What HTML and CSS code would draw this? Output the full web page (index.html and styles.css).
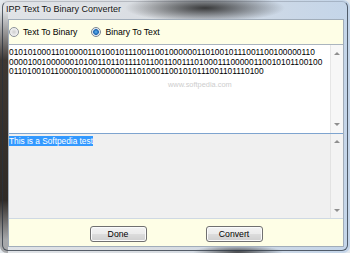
FILE: index.html
```html
<!DOCTYPE html>
<html lang="en">
    <head>
        <meta charset="UTF-8">
        <meta name="viewport" content="width=device-width, initial-scale=1.0">
        <title>IPP Text To Binary Converter</title>

        <link rel="stylesheet" href="styles.css">
    </head>
    <body>
        <div class="window">
            <div class="titlebar">IPP Text To Binary Converter</div>
            <div class="client">
                <div class="options">
                    <label class="radio"><span class="dot"></span>Text To Binary</label>
                    <label class="radio checked"><span class="dot"></span>Binary To Text</label>
                </div>

                <!-- binary input -->
                <div class="box box-binary">
                    <div class="box-text">0101010001101000011010010111001100100000011010010111001100100000110
000010010000001010011011011110110011001110100011100000110010101100100
01101001011000010010000001110100011001010111001101110100</div>
                    <div class="scrollbar">
                        <span class="arrow up"></span>
                        <span class="arrow down"></span>
                    </div>
                    <div class="watermark">www.softpedia.com</div>
                </div>

                <!-- converted text -->
                <div class="box box-result">
                    <div class="box-text"><span class="selected">This is a Softpedia test</span></div>
                    <div class="scrollbar">
                        <span class="arrow up"></span>
                        <span class="arrow down"></span>
                    </div>
                </div>

                <div class="actions">
                    <button class="btn">Done</button>
                    <button class="btn">Convert</button>
                </div>
            </div>
        </div>
    </body>
</html>
```
FILE: styles.css
```css
body {
    margin: 0;
    padding: 0;
    background-color: #e4e9ee;
    font-family: "Liberation Sans", Arial, sans-serif;
}

.window {
    position: relative;
    width: 350px;
    height: 253px;
    display: flex;
    flex-direction: column;
    border-radius: 7px;
    background-color: #d3dbe4;
    background-image:
        radial-gradient(ellipse 80px 14px at 205px 8px, rgba(40, 40, 40, 0.9), rgba(40, 40, 40, 0)),
        radial-gradient(ellipse 45px 7px at 238px 252px, rgba(25, 25, 25, 0.75), rgba(25, 25, 25, 0)),
        linear-gradient(to bottom, rgba(90, 85, 80, 0) 10px, #3e3732 60px, #2f2a26 200px, rgba(110, 110, 110, 0.5) 240px),
        linear-gradient(to right, #e0e3e7 0, #d9dde2 45%, #c4d5e9 100%);
    background-size: auto, auto, 8px 100%, auto;
    background-repeat: no-repeat;
}

/* dark outline of the glass frame */
.window::after {
    content: "";
    position: absolute;
    top: 1px;
    left: 2px;
    right: 2px;
    bottom: 2px;
    border: 1px solid rgba(40, 50, 62, 0.75);
    border-top-color: rgba(40, 50, 62, 0.2);
    border-radius: 6px;
    pointer-events: none;
}

.titlebar {
    height: 19px;
    line-height: 19px;
    padding-left: 6px;
    font-size: 9px;
    color: #151515;
    text-shadow: 0 0 5px rgba(255, 255, 255, 0.9);
}

.client {
    flex: 1;
    display: flex;
    flex-direction: column;
    margin: 0 6px 6px 8px;
    border: 1px solid #a1adba;
    background-color: #fefee6;
}

.options {
    height: 24px;
    display: flex;
    align-items: center;
    font-size: 8.7px;
    color: #000;
}

.radio {
    display: flex;
    align-items: center;
    gap: 4px;
    margin-right: 14px;
}

.dot {
    width: 10px;
    height: 10px;
    box-sizing: border-box;
    border: 1px solid #8c9198;
    border-radius: 50%;
    background: radial-gradient(circle, #cfcfcf 0, #e6e6e6 2.5px, #f6f6f6 4px);
}

.radio.checked .dot {
    border-color: #7a8591;
    background: radial-gradient(circle, #5fb4f2 0, #1a64b0 2.5px, #d5dfea 3.2px, #f4f6f8 4px);
}

.box {
    position: relative;
    display: flex;
}

.box-binary {
    height: 88px;
    border-top: 1px solid #aab4be;
    background-color: white;
}

.box-result {
    height: 84px;
    border-top: 1px solid #7ea4cf;
    background-color: #f0f0f0;
}

.box-text {
    flex: 1;
    color: #000;
}

.box-binary .box-text {
    padding-top: 3px;
    font-size: 8.4px;
    line-height: 9.5px;
    white-space: pre;
}

.box-result .box-text {
    padding-top: 2px;
    font-size: 8.3px;
}

.selected {
    background-color: #3399ff;
    color: white;
}

.scrollbar {
    width: 13px;
    display: flex;
    flex-direction: column;
    justify-content: space-between;
    align-items: center;
    padding: 7px 0;
    box-sizing: border-box;
    border-left: 1px solid #e6e6e6;
    background-color: #f7f7f7;
}

.box-result .scrollbar {
    padding: 6px 0;
    background-color: #f3f3f3;
    border-left-color: #e2e2e2;
}

.arrow {
    width: 0;
    height: 0;
    border-left: 3px solid transparent;
    border-right: 3px solid transparent;
}

.arrow.up {
    border-bottom: 3px solid #8f8f8f;
}

.arrow.down {
    border-top: 3px solid #8f8f8f;
}

.watermark {
    position: absolute;
    top: 35px;
    left: 159px;
    font-size: 7.4px;
    color: #cdcdcd;
}

.actions {
    flex: 1;
    display: flex;
    justify-content: center;
    align-items: flex-start;
    gap: 59px;
    padding-top: 7px;
    border-top: 1px solid #cfd9e3;
}

.btn {
    width: 57px;
    height: 16px;
    padding: 0;
    border: 1px solid #707070;
    border-radius: 3px;
    background: linear-gradient(#f3f3f3 0, #ebebeb 50%, #dddddd 50%, #cfcfcf 100%);
    box-shadow: inset 0 0 0 1px #fbfbfb;
    font-family: "Liberation Sans", Arial, sans-serif;
    font-size: 8.7px;
    color: #000;
}
```
